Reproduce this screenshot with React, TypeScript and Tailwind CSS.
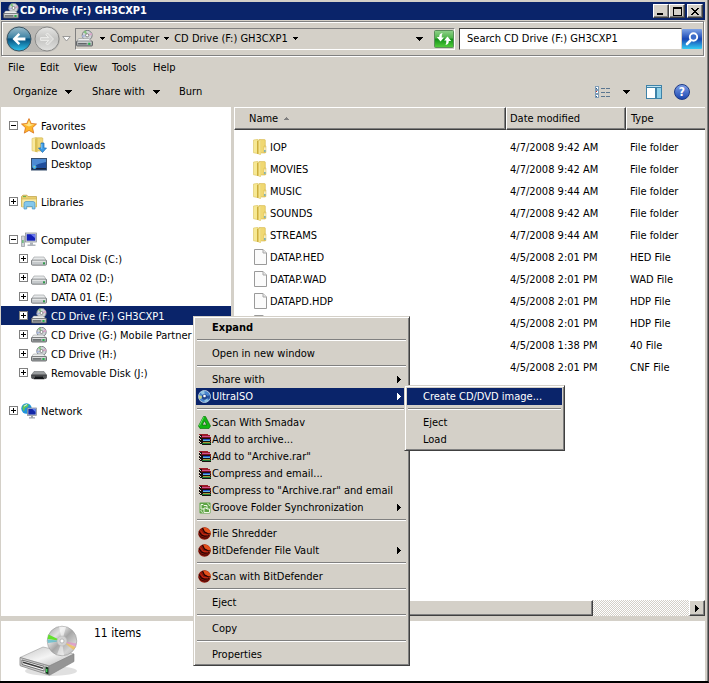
import type { ReactNode } from 'react';

type IconProps = { className?: string };

/* ---------- Icons ---------- */

function Caret({ className = 'h-1 w-[7px]' }: IconProps) {
  return (
    <svg viewBox="0 0 7 4" className={`shrink-0 ${className}`} shapeRendering="crispEdges" aria-hidden="true">
      <path d="M0 0h7v1H6v1H5v1H4v1H3V3H2V2H1V1H0z" fill="currentColor" />
    </svg>
  );
}

function MenuArrow() {
  return (
    <svg viewBox="0 0 4 7" className="h-[7px] w-1 shrink-0" shapeRendering="crispEdges" aria-hidden="true">
      <path d="M0 0h1v1h1v1h1v1h1v1H3v1H2v1H1v1H0z" fill="currentColor" />
    </svg>
  );
}

function DiscDriveIcon({ className = 'size-4' }: IconProps) {
  return (
    <svg viewBox="0 0 16 16" className={`shrink-0 ${className}`} aria-hidden="true">
      <circle cx="10.500" cy="5" r="4.700" fill="#cfd3d6" stroke="#777c80" strokeWidth=".9" />
      <path d="M10.500 5 7 1.800a4.800 4.800 0 0 1 2.400-1.400z" fill="#7fc47a" />
      <path d="M10.500 5l4-2.500a4.800 4.800 0 0 1 .6 2.400z" fill="#d8a6c8" />
      <path d="M10.500 5 6 7a4.800 4.800 0 0 1-.3-2z" fill="#a7b6dd" />
      <circle cx="10.500" cy="5" r="1.500" fill="#fff" stroke="#777" strokeWidth=".8" />
      <path d="M2.500 8h9.500l3.500 3H.5z" fill="#eceeee" stroke="#8a8d8f" strokeWidth=".5" />
      <rect x=".5" y="10.500" width="15" height="4.500" rx=".8" fill="#a9adaf" stroke="#505456" strokeWidth=".8" />
      <path d="M1.500 11.300h13" stroke="#f4f4f4" strokeWidth=".8" />
      <rect x="2" y="12.300" width="8" height="1.200" fill="#5c6062" />
      <rect x="11.500" y="12" width="2" height="2" fill="#22b44a" />
    </svg>
  );
}

function DiskIcon({ dark = false }: { dark?: boolean }) {
  if (dark) {
    return (
      <svg viewBox="0 0 16 16" className="size-4 shrink-0" aria-hidden="true">
        <path d="M3 6.500h10l2.500 3.500H.5z" fill="#9a9d9f" stroke="#6b6e70" strokeWidth=".6" />
        <path d="M.5 10h15v2.500q0 1-1 1h-1L12 11.500H4L2.500 13.500h-1q-1 0-1-1z" fill="#55585a" stroke="#2c2e30" strokeWidth=".6" />
        <path d="M4 11.500h8l1.500 2.800h-11z" fill="#15171a" />
      </svg>
    );
  }
  return (
    <svg viewBox="0 0 16 16" className="size-4 shrink-0" aria-hidden="true">
      <path d="M3 6h10l2.500 4H.5z" fill="#e6e8e9" stroke="#989c9e" strokeWidth=".6" />
      <path d="M.5 10q0-.8.8-.8h13.400q.8 0 .8.800v3.200q0 1-1 1h-13q-1 0-1-1z" fill="#c5c9cb" stroke="#686c6e" strokeWidth=".8" />
      <path d="M1.500 10.200h13" stroke="#fafafa" strokeWidth=".8" />
      <rect x="12" y="11.300" width="2" height="2" fill="#2f9a4b" />
    </svg>
  );
}

function StarIcon() {
  return (
    <svg viewBox="0 0 16 16" className="size-4 shrink-0" aria-hidden="true">
      <path d="M8 .6l2.200 4.900 5.300.5-4 3.700 1.200 5.400L8 12.400l-4.700 2.700 1.200-5.400-4-3.700 5.300-.5z" fill="#fdb62b" stroke="#d8701a" strokeWidth=".8" strokeLinejoin="round" />
      <path d="M8 2.600l1.500 3.600 3.700.4L8 8.500 2.800 6.600l3.700-.4z" fill="#ffe58a" />
    </svg>
  );
}

function FolderIcon() {
  return (
    <svg viewBox="0 0 16 16" className="size-4 shrink-0" aria-hidden="true">
      <path d="M1.500 1 6 .3v14.200l-4.500-.7z" fill="#f6e893" stroke="#dcc560" strokeWidth=".6" />
      <path d="M7 .6h5.500q.8 0 .8.800V14H7z" fill="#f0d873" stroke="#d3b54a" strokeWidth=".6" />
      <path d="M5 2 8.800.8v14.900L5 14.700z" fill="#cdae3c" />
      <path d="M6.500 1.700 8.800.8v14.900l-2.300-.7z" fill="#f5e48c" />
      <path d="M12 7h2v6.500h-2z" fill="#f2dc84" stroke="#cdae45" strokeWidth=".4" />
      <path d="M12.900 8.500V11" stroke="#fff" strokeWidth=".9" />
      <path d="M12.900 11v2" stroke="#3c9be0" strokeWidth="1" />
    </svg>
  );
}

function DownloadsIcon() {
  return (
    <svg viewBox="0 0 16 16" className="size-4 shrink-0" aria-hidden="true">
      <path d="M1 1.500 5 .5v14l-4-.8z" fill="#f8e9a0" stroke="#dcc160" strokeWidth=".6" />
      <path d="M5 .8h6q.8 0 .8.800V14H5z" fill="#efd778" stroke="#cfae43" strokeWidth=".6" />
      <path d="M4 2 6.500 1v14.500L4 14.500z" fill="#dbc055" />
      <path d="M10 6h3v5h2.500l-4 4.500-4-4.500H10z" fill="#3b9be6" stroke="#1767b0" strokeWidth=".7" />
      <path d="M10.700 6.800v5" stroke="#9bd3fb" strokeWidth=".8" />
    </svg>
  );
}

function DesktopIcon() {
  return (
    <svg viewBox="0 0 16 16" className="size-4 shrink-0" aria-hidden="true">
      <rect x=".5" y="2.500" width="15" height="11.500" fill="#1f4e9c" stroke="#38506e" />
      <path d="M1 3h14v3Q8 7 1 11z" fill="#4e8bd3" />
      <path d="M1 12h14v1.500H1z" fill="#16233a" />
      <circle cx="3.500" cy="11" r="2" fill="#45b0ea" />
      <path d="M2.800 10.200h1v1h-1z" fill="#f6d44a" />
    </svg>
  );
}

function LibrariesIcon() {
  return (
    <svg viewBox="0 0 16 16" className="size-4 shrink-0" aria-hidden="true">
      <path d="M.5 2.500 2 1.200h4l1 1.300h8.500v10H.5z" fill="#e9cf70" stroke="#bd9d41" strokeWidth=".7" />
      <path d="M.8 5h14.700v8H.8z" fill="#f8eaa6" stroke="#d0b352" strokeWidth=".6" />
      <path d="M2 2.600h3" stroke="#4fae4c" strokeWidth=".9" />
      <path d="M3 15V9.500Q3 7.500 5 7.500h7q2 0 2 2V15h-2.700v-2.500H5.700V15z" fill="#85c8ec" stroke="#4b94c2" strokeWidth=".7" />
    </svg>
  );
}

function ComputerIcon() {
  return (
    <svg viewBox="0 0 16 16" className="size-4 shrink-0" aria-hidden="true">
      <path d="M.5 4h3v10.500h-3z" fill="#cdd1d6" stroke="#84898f" strokeWidth=".6" />
      <path d="M1.300 8h1.200v3H1.300z" fill="#4db35c" />
      <rect x="4.500" y="1" width="11" height="9" fill="#d5d9df" stroke="#81868e" strokeWidth=".7" />
      <rect x="5.700" y="2.200" width="8.600" height="6.500" fill="#1320b8" />
      <path d="M9.500 2.200h4.800v4z" fill="#6d7cf0" />
      <path d="M9 10.500h3v2H9zM6.500 12.500h8v1.500h-8z" fill="#aeb3ba" />
    </svg>
  );
}

function NetworkIcon() {
  return (
    <svg viewBox="0 0 16 16" className="size-4 shrink-0" aria-hidden="true">
      <circle cx="5.500" cy="5.500" r="5.200" fill="#1f93dd" />
      <path d="M2 2.500Q5 0 8 1.500L6.500 4 4 5 3 8.500Q.5 6 2 2.500zM6 8l3-1v3z" fill="#62c65a" />
      <path d="M3 3.200 6 1.500" stroke="#d8f3ff" strokeWidth="1" />
      <rect x="6.500" y="5" width="9" height="7.500" fill="#dfe3e8" stroke="#7c838c" strokeWidth=".7" />
      <rect x="7.300" y="5.800" width="7.400" height="5.800" fill="#1428a8" />
      <path d="M11 5.800h3.700v3.500z" fill="#5f83ef" />
      <path d="M10 13h2v1.200h2v1.300H8v-1.300h2z" fill="#9da3ab" />
    </svg>
  );
}

function FileIcon() {
  return (
    <svg viewBox="0 0 16 16" className="size-4 shrink-0" aria-hidden="true">
      <path d="M2.500.5h8.500l3.500 3.500v11.500h-12z" fill="#fbfbfb" stroke="#9a9a9a" />
      <path d="M11 .5V4h3.500" fill="#e6e6e6" stroke="#a8a8a8" />
    </svg>
  );
}

function UltraIsoIcon() {
  return (
    <svg viewBox="0 0 13 13" className="size-[13px] shrink-0" aria-hidden="true">
      <circle cx="6.500" cy="6.500" r="6" fill="#4a86cf" stroke="#c3d3e2" strokeWidth=".9" />
      <path d="M6.500 6.500 2 2.200A6 6 0 0 1 6.500.8zM6.500 6.500l4.300 4.300a6 6 0 0 1-4.300 1.500z" fill="#92c4e2" />
      <path d="M6.500 6.500.8 5.200A6 6 0 0 0 1.500 9.500z" fill="#c4d08f" />
      <path d="M6.500 6.500l5.600-1.200a6 6 0 0 1-.8 4z" fill="#27529c" />
      <circle cx="6.500" cy="7" r="2.700" fill="#1f458f" />
      <circle cx="6.500" cy="6" r="1.300" fill="#fff" />
    </svg>
  );
}

function SmadavIcon() {
  return (
    <svg viewBox="0 0 13 13" className="size-[13px] shrink-0" aria-hidden="true">
      <path d="M5.500.5h2l5 9.500-1.500 2.500h-9L.5 10z" fill="#12b512" stroke="#087a08" strokeWidth=".7" />
      <path d="M6.500 4.800 8.800 9H4.200z" fill="#d4d0c8" stroke="#066a06" strokeWidth=".7" />
      <path d="M5.700 1.200 1.400 9.800" stroke="#67e667" strokeWidth=".9" />
    </svg>
  );
}

function RarIcon() {
  return (
    <svg viewBox="0 0 13 13" className="size-[13px] shrink-0" shapeRendering="crispEdges" aria-hidden="true">
      <path d="M1 1h8l1 1h2v2h1v8H4v-1H2v-1H1z" fill="#1a1010" />
      <path d="M1 1h8l1 1h2v1H4V2H1z" fill="#9b1c28" />
      <path d="M4 3h8v1H4z" fill="#d0508c" />
      <path d="M3 4h10v1H3z" fill="#7a1020" />
      <path d="M5 6h7v1H5z" fill="#2a50c8" />
      <path d="M5 7h7v1H5z" fill="#58b8e0" />
      <path d="M5 9h7v1H5z" fill="#a8983a" />
      <path d="M4 10h9v1H4z" fill="#1d7d35" />
      <path d="M0 2h2v1H0zM2 3h1v1H2zM0 5h2v1H0zM2 6h1v1H2zM0 8h2v1H0zM2 9h1v1H2z" fill="#ded9c9" />
      <path d="M12 5h1v2h-1zM12 8h1v1h-1z" fill="#7a2a1a" />
    </svg>
  );
}

function GrooveIcon() {
  return (
    <svg viewBox="0 0 13 13" className="size-[13px] shrink-0" aria-hidden="true">
      <rect x="1.500" y="1.500" width="11" height="11" rx="1" fill="#5da345" />
      <path d="M3 3.500h2l1 1h3V8H3z" fill="none" stroke="#eef8e6" />
      <path d="M6 7h2l1 1h2.500v3.500H6z" fill="#5da345" stroke="#eef8e6" />
      <path d="M9.500 2.500q2 .5 2 2.500M2.800 9q0 2 2 2.500" fill="none" stroke="#d7efc9" />
    </svg>
  );
}

function BitDefenderIcon() {
  return (
    <svg viewBox="0 0 13 13" className="size-[13px] shrink-0" aria-hidden="true">
      <circle cx="6.500" cy="6.500" r="6.200" fill="#8f1508" />
      <path d="M5 .8Q9-.5 11.500 3t.5 5.500L9 5.500 6 4z" fill="#e2501c" />
      <path d="M4.500 1 6.500 5l3 1.500 3 .5M1 4.500 3.500 8l3 1.300 5-.5" fill="none" stroke="#1c0403" strokeWidth="1.100" />
      <path d="M.8 7.500 3 10l4 1.200 3-.4" fill="none" stroke="#3a0604" strokeWidth=".9" />
      <path d="M2.500 3.500 5 7.300l5 .6" fill="none" stroke="#c62a12" strokeWidth="1" />
    </svg>
  );
}

function BackIcon() {
  return (
    <svg viewBox="0 0 26 26" className="size-[26px]" aria-hidden="true">
      <defs>
        <linearGradient id="back" x1="0" y1="0" x2="0" y2="1">
          <stop offset="0" stopColor="#9cbccb" />
          <stop offset=".45" stopColor="#3e83a5" />
          <stop offset=".5" stopColor="#07507e" />
          <stop offset="1" stopColor="#2fc4ee" />
        </linearGradient>
      </defs>
      <circle cx="13" cy="13" r="12" fill="url(#back)" stroke="#3c5563" />
      <path d="M12.500 7 6.500 13l6 6 1.700-1.800-2.800-2.800h8v-2.800h-8l2.800-2.800z" fill="#fff" />
    </svg>
  );
}

function ForwardIcon() {
  return (
    <svg viewBox="0 0 26 26" className="size-[26px]" aria-hidden="true">
      <defs>
        <linearGradient id="forward" x1="0" y1="0" x2="0" y2="1">
          <stop offset="0" stopColor="#e6e6e4" />
          <stop offset=".5" stopColor="#c4c4c2" />
          <stop offset="1" stopColor="#e2e2e0" />
        </linearGradient>
      </defs>
      <circle cx="13" cy="13" r="12" fill="url(#forward)" stroke="#8b8b89" />
      <path d="M13.500 7l6 6-6 6-1.700-1.800 2.800-2.800h-8v-2.800h8l-2.800-2.800z" fill="#d6d6d4" stroke="#f2f2f0" strokeWidth=".8" />
    </svg>
  );
}

function RefreshIcon() {
  return (
    <svg viewBox="0 0 20 18" className="h-[18px] w-5" aria-hidden="true">
      <defs>
        <linearGradient id="refresh" x1="0" y1="0" x2="0" y2="1">
          <stop offset="0" stopColor="#8fd18b" />
          <stop offset=".45" stopColor="#4fb449" />
          <stop offset=".5" stopColor="#119018" />
          <stop offset="1" stopColor="#55cf3c" />
        </linearGradient>
      </defs>
      <rect x=".5" y=".5" width="19" height="17" rx="1" fill="url(#refresh)" stroke="#5b8f5b" />
      <path d="M8.500 3Q5 3.500 5.200 7H2.800L6.500 11.500 10 7.500H7.700Q7.500 5 8.500 3zM11.500 15q3.500-.5 3.300-4h2.400L13.500 6.500 10 10.500h2.300q.2 2.500-.8 4.500z" fill="#fff" />
    </svg>
  );
}

function SearchIcon() {
  return (
    <svg viewBox="0 0 20 20" className="size-5" aria-hidden="true">
      <defs>
        <linearGradient id="search" x1="0" y1="0" x2="0" y2="1">
          <stop offset="0" stopColor="#7ea3e6" />
          <stop offset=".5" stopColor="#1746b4" />
          <stop offset="1" stopColor="#34cdf4" />
        </linearGradient>
      </defs>
      <rect width="20" height="20" rx="1" fill="url(#search)" />
      <path d="M8.500 11.500 5 15" stroke="#fff" strokeWidth="2.600" strokeLinecap="round" />
      <circle cx="11.500" cy="8" r="3.700" fill="#3c6cc9" stroke="#fff" strokeWidth="1.900" />
    </svg>
  );
}

function ViewsIcon() {
  return (
    <svg viewBox="0 0 16 12" className="h-3 w-4" shapeRendering="crispEdges" aria-hidden="true">
      <path d="M0 0h4v12H0z" fill="#7f9cb6" />
      <path d="M1 1h2v2H1zM1 5h2v2H1zM1 9h2v2H1z" fill="#fff" />
      <path d="M1 2h1v1H1zM1 10h1v1H1z" fill="#2f5d8a" />
      <path d="M1 5h1v1H1z" fill="#d02a1b" />
      <path d="M6 2h4v1H6zM11 2h4v1h-4zM6 6h4v1H6zM11 6h4v1h-4zM6 10h4v1H6zM11 10h4v1h-4z" fill="#5b7690" />
    </svg>
  );
}

function PreviewPaneIcon() {
  return (
    <svg viewBox="0 0 16 14" className="h-3.5 w-4" shapeRendering="crispEdges" aria-hidden="true">
      <path d="M0 0h16v14H0z" fill="#3e82a8" />
      <path d="M1 1h14v1H1z" fill="#bfe3f2" />
      <path d="M1 3h8v10H1z" fill="#fff" />
      <path d="M11 3h4v10h-4z" fill="#8fd0e8" />
    </svg>
  );
}

function HelpIcon() {
  return (
    <span className="flex size-4 items-center justify-center rounded-full border border-[#1c3a86] bg-linear-to-b from-[#7e9ee6] to-[#1b46b0] text-xs font-bold text-white">
      ?
    </span>
  );
}

function LargeDriveIcon() {
  return (
    <svg viewBox="0 0 60 52" className="h-[52px] w-[60px] shrink-0" aria-hidden="true">
      <defs>
        <linearGradient id="disc" x1="0" y1="0" x2="1" y2="1">
          <stop offset="0" stopColor="#9c9c9c" />
          <stop offset=".3" stopColor="#e2e2e2" />
          <stop offset=".5" stopColor="#a6a6a6" />
          <stop offset=".75" stopColor="#d2d2d2" />
          <stop offset="1" stopColor="#b0b0b0" />
        </linearGradient>
        <linearGradient id="lid" x1="0" y1="0" x2="1" y2="1">
          <stop offset="0" stopColor="#c6c6c6" />
          <stop offset=".5" stopColor="#f4f4f4" />
          <stop offset="1" stopColor="#b0b0b0" />
        </linearGradient>
      </defs>
      <ellipse cx="32" cy="46" rx="26" ry="5" fill="#000" opacity=".12" />
      <path d="M1 32.500 24 22l31 7-24 12z" fill="url(#lid)" stroke="#9a9a9a" strokeWidth=".6" />
      <path d="M1 32.500l29 8.500v9L2 41q-1 0-1-1z" fill="#cfcfcf" stroke="#777" strokeWidth=".7" />
      <path d="M30 41l25-12v7.500L31 50q-1 .3-1 0z" fill="#959595" stroke="#808080" strokeWidth=".6" />
      <path d="M3 35l22 6.300V46L3 39.500z" fill="#f6f6f6" stroke="#555" strokeWidth=".8" />
      <path d="M4 37.300l20 5.900" stroke="#3c3c3c" strokeWidth="1.600" />
      <path d="M26.500 41.500l3 .9v6.800l-3-1z" fill="#12351a" />
      <path d="M27.700 44v3" stroke="#39d353" strokeWidth="1.400" />
      <circle cx="43" cy="16" r="14.800" fill="url(#disc)" stroke="#989898" strokeWidth=".6" />
      <path d="M43 16 29.500 9.500 28.500 14z" fill="#62e02c" />
      <path d="M43 16 28.300 14.500 29 18z" fill="#4bb9c9" opacity=".7" />
      <path d="M43 16 56.500 22l-2 3z" fill="#f2c05a" opacity=".8" />
      <path d="M43 16 57.500 18.500l-1 3z" fill="#e68ec4" opacity=".7" />
      <path d="M43 16 40 1.500l7 .4z" fill="#fff" opacity=".6" />
      <path d="M43 16 38 29.500l7 1z" fill="#fff" opacity=".5" />
      <circle cx="43" cy="16" r="5" fill="#d2d2d2" stroke="#b4b4b4" strokeWidth=".5" />
      <circle cx="43" cy="16" r="2" fill="#fff" stroke="#9d9d9d" strokeWidth=".6" />
    </svg>
  );
}

/* ---------- Data ---------- */

type TreeNode = { label: string; icon: ReactNode; expand?: '+' | '-'; level: 0 | 1; selected?: boolean };

const treeGroups: TreeNode[][] = [
  [
    { label: 'Favorites', icon: <StarIcon />, expand: '-', level: 0 },
    { label: 'Downloads', icon: <DownloadsIcon />, level: 1 },
    { label: 'Desktop', icon: <DesktopIcon />, level: 1 },
  ],
  [{ label: 'Libraries', icon: <LibrariesIcon />, expand: '+', level: 0 }],
  [
    { label: 'Computer', icon: <ComputerIcon />, expand: '-', level: 0 },
    { label: 'Local Disk (C:)', icon: <DiskIcon />, expand: '+', level: 1 },
    { label: 'DATA 02 (D:)', icon: <DiskIcon />, expand: '+', level: 1 },
    { label: 'DATA 01 (E:)', icon: <DiskIcon />, expand: '+', level: 1 },
    { label: 'CD Drive (F:) GH3CXP1', icon: <DiscDriveIcon />, expand: '+', level: 1, selected: true },
    { label: 'CD Drive (G:) Mobile Partner', icon: <DiscDriveIcon />, expand: '+', level: 1 },
    { label: 'CD Drive (H:)', icon: <DiscDriveIcon />, expand: '+', level: 1 },
    { label: 'Removable Disk (J:)', icon: <DiskIcon dark />, expand: '+', level: 1 },
  ],
  [{ label: 'Network', icon: <NetworkIcon />, expand: '+', level: 0 }],
];

const files = [
  { name: 'IOP', date: '4/7/2008 9:42 AM', type: 'File folder' },
  { name: 'MOVIES', date: '4/7/2008 9:42 AM', type: 'File folder' },
  { name: 'MUSIC', date: '4/7/2008 9:44 AM', type: 'File folder' },
  { name: 'SOUNDS', date: '4/7/2008 9:42 AM', type: 'File folder' },
  { name: 'STREAMS', date: '4/7/2008 9:44 AM', type: 'File folder' },
  { name: 'DATAP.HED', date: '4/5/2008 2:01 PM', type: 'HED File' },
  { name: 'DATAP.WAD', date: '4/5/2008 2:01 PM', type: 'WAD File' },
  { name: 'DATAPD.HDP', date: '4/5/2008 2:01 PM', type: 'HDP File' },
  { name: '', date: '4/5/2008 2:01 PM', type: 'HDP File' },
  { name: '', date: '4/5/2008 1:38 PM', type: '40 File' },
  { name: '', date: '4/5/2008 2:01 PM', type: 'CNF File' },
];

type MenuEntry = { label: string; icon?: ReactNode; bold?: boolean; arrow?: boolean; active?: boolean; submenu?: MenuEntry[][] };

const contextMenu: MenuEntry[][] = [
  [{ label: 'Expand', bold: true }],
  [{ label: 'Open in new window' }],
  [
    { label: 'Share with', arrow: true },
    {
      label: 'UltraISO',
      icon: <UltraIsoIcon />,
      arrow: true,
      active: true,
      submenu: [[{ label: 'Create CD/DVD image...', active: true }], [{ label: 'Eject' }, { label: 'Load' }]],
    },
  ],
  [
    { label: 'Scan With Smadav', icon: <SmadavIcon /> },
    { label: 'Add to archive...', icon: <RarIcon /> },
    { label: 'Add to "Archive.rar"', icon: <RarIcon /> },
    { label: 'Compress and email...', icon: <RarIcon /> },
    { label: 'Compress to "Archive.rar" and email', icon: <RarIcon /> },
    { label: 'Groove Folder Synchronization', icon: <GrooveIcon />, arrow: true },
  ],
  [
    { label: 'File Shredder', icon: <BitDefenderIcon /> },
    { label: 'BitDefender File Vault', icon: <BitDefenderIcon />, arrow: true },
  ],
  [{ label: 'Scan with BitDefender', icon: <BitDefenderIcon /> }],
  [{ label: 'Eject' }],
  [{ label: 'Copy' }],
  [{ label: 'Properties' }],
];

/* ---------- Parts ---------- */

const raised =
  'border border-t-white border-l-white border-r-[#404040] border-b-[#404040] bg-[#d4d0c8] shadow-[inset_-1px_-1px_0_#808080]';

function TitleBar() {
  return (
    <header className="flex h-[18px] items-center gap-px bg-[#0a246a] px-0.5 text-white">
      <DiscDriveIcon />
      <h1 className="flex-1 font-bold">CD Drive (F:) GH3CXP1</h1>
      <div className="flex text-black">
        <button aria-label="Minimize" className={`flex h-3.5 w-4 items-end justify-center pb-0.5 ${raised}`}>
          <span className="mr-0.5 h-0.5 w-1.5 bg-black" />
        </button>
        <button aria-label="Maximize" className={`flex h-3.5 w-4 items-center justify-center ${raised}`}>
          <span className="h-[9px] w-[9px] border border-t-2 border-black" />
        </button>
        <button aria-label="Close" className={`ml-0.5 flex h-3.5 w-4 items-center justify-center ${raised}`}>
          <svg viewBox="0 0 8 7" className="h-[7px] w-2" shapeRendering="crispEdges" aria-hidden="true">
            <path d="M0 0h2v1h1v1h2V1h1V0h2v1H7v1H6v1H5v1h1v1h1v1h1v1H6V6H5V5H3v1H2v1H0V6h1V5h1V4h1V3H2V2H1V1H0z" fill="#000" />
          </svg>
        </button>
      </div>
    </header>
  );
}

function NavigationBar() {
  return (
    <nav className="mt-px mr-px flex h-[35px] items-center border border-[#808080] pr-px pl-1 shadow-[1px_1px_0_#fff,inset_1px_1px_0_#fff]">
      <div className="flex items-center gap-0.5 rounded-full bg-[#bab8b4]">
        <button aria-label="Back">
          <BackIcon />
        </button>
        <button aria-label="Forward">
          <ForwardIcon />
        </button>
      </div>
      <button aria-label="Recent pages" className="ml-0.5 w-[9px]">
        <svg viewBox="0 0 9 6" className="h-1.5 w-[9px]" aria-hidden="true">
          <path d="M.8.500h7.400L4.500 5z" fill="#fff" stroke="#888" strokeWidth=".8" />
        </svg>
      </button>
      <div className="ml-1 flex h-[22px] flex-1 items-center border border-t-[#808080] border-l-[#808080] border-r-white border-b-white">
        <DiscDriveIcon className="size-[17px]" />
        <Caret className="ml-[7px] h-[3px] w-[5px]" />
        <button className="ml-[5px]">Computer</button>
        <Caret className="ml-[5px] h-[3px] w-[5px]" />
        <button className="ml-[5px]">CD Drive (F:) GH3CXP1</button>
        <Caret className="ml-[5px] h-[3px] w-[5px]" />
        <button aria-label="Previous locations" className="mr-[11px] ml-auto">
          <Caret />
        </button>
        <button aria-label="Refresh">
          <RefreshIcon />
        </button>
      </div>
      <input
        type="search"
        aria-label="Search"
        defaultValue="Search CD Drive (F:) GH3CXP1"
        className="ml-1 h-[22px] w-[223px] border border-t-[#404040] border-l-[#404040] border-r-[#d4d0c8] border-b-[#d4d0c8] bg-white px-[7px] outline-none"
      />
      <button aria-label="Start search">
        <SearchIcon />
      </button>
    </nav>
  );
}

function MenuBar() {
  return (
    <div className="flex h-[22px] items-center pt-0.5 pl-[7px]">
      <button className="w-8 text-left">File</button>
      <button className="w-[34px] text-left">Edit</button>
      <button className="w-[38px] text-left">View</button>
      <button className="w-[41px] text-left">Tools</button>
      <button className="text-left">Help</button>
    </div>
  );
}

function Toolbar() {
  return (
    <div className="flex h-[28px] items-center pr-[15px] pl-3">
      <button className="flex w-[79px] items-center gap-2">
        Organize
        <Caret />
      </button>
      <button className="flex w-[87px] items-center gap-2">
        Share with
        <Caret />
      </button>
      <button>Burn</button>
      <div className="ml-auto flex items-center">
        <button aria-label="Change view">
          <ViewsIcon />
        </button>
        <button aria-label="More view options" className="ml-3">
          <Caret />
        </button>
        <button aria-label="Show the preview pane" className="ml-4">
          <PreviewPaneIcon />
        </button>
        <button aria-label="Get help" className="ml-3">
          <HelpIcon />
        </button>
      </div>
    </div>
  );
}

function ExpandBox({ state }: { state: '+' | '-' }) {
  return (
    <svg viewBox="0 0 9 9" className="size-[9px] shrink-0" shapeRendering="crispEdges" aria-hidden="true">
      <path d="M0 0h9v9H0z" fill="#808080" />
      <path d="M1 1h7v7H1z" fill="#fff" />
      <path d={state === '+' ? 'M2 4h5v1H2zM4 2h1v5H4z' : 'M2 4h5v1H2z'} fill="#000" />
    </svg>
  );
}

function Sidebar() {
  return (
    <aside className="w-[230px] shrink-0 space-y-[19px] bg-white pt-[9px]">
      {treeGroups.map((group) => (
        <ul key={group[0].label}>
          {group.map((node) => (
            <li key={node.label}>
              <button
                className={`flex h-[19px] w-full items-center text-left whitespace-nowrap ${node.level === 0 ? 'pl-2' : 'pl-[18px]'} ${
                  node.selected ? 'bg-[#0a246a] text-white' : ''
                }`}
              >
                <span className="w-3 shrink-0">{node.expand && <ExpandBox state={node.expand} />}</span>
                {node.icon}
                <span className="ml-1 pt-0.5">{node.label}</span>
              </button>
            </li>
          ))}
        </ul>
      ))}
    </aside>
  );
}

function FileList() {
  return (
    <section className="flex min-w-0 flex-1 flex-col bg-white">
      <table className="w-full table-fixed border-separate border-spacing-0 text-left">
        <thead>
          <tr className="h-[23px]">
            <th className={`pl-3.5 font-normal ${raised}`}>
              <span className="flex items-center gap-1.5">
                Name
                <Caret className="h-[3px] w-[5px] rotate-180 text-[#808080]" />
              </span>
            </th>
            <th className={`w-[120px] pl-[3px] font-normal ${raised}`}>Date modified</th>
            <th className="w-[79px] border-t border-b border-l border-t-white border-l-white border-b-[#404040] bg-[#d4d0c8] pl-1 font-normal shadow-[inset_0_-1px_0_#808080]">
              Type
            </th>
          </tr>
        </thead>
        <tbody className="before:block before:h-1.5">
          {files.map((file, index) => (
            <tr key={index} className="h-[22px]">
              <td className="pl-[18px]">
                <span className="flex items-center gap-0.5">
                  {file.type === 'File folder' ? <FolderIcon /> : <FileIcon />}
                  <span className="pt-0.5">{file.name}</span>
                </span>
              </td>
              <td className="pt-0.5 pl-1">{file.date}</td>
              <td className="pt-0.5 pl-1">{file.type}</td>
            </tr>
          ))}
        </tbody>
      </table>
      <div className="mt-auto flex h-4">
        <button aria-label="Scroll left" className={`flex w-4 items-center justify-center ${raised}`}>
          <span className="rotate-180">
            <MenuArrow />
          </span>
        </button>
        <div className={`flex-1 ${raised}`} />
        <div className="w-24 bg-[repeating-conic-gradient(#fff_0_25%,#d4d0c8_0_50%)] bg-[length:2px_2px]" />
        <button aria-label="Scroll right" className={`flex w-4 items-center justify-center ${raised}`}>
          <MenuArrow />
        </button>
      </div>
    </section>
  );
}

function PopupMenu({ groups, className }: { groups: MenuEntry[][]; className: string }) {
  return (
    <div
      role="menu"
      className={`absolute z-10 border border-t-[#d4d0c8] border-l-[#d4d0c8] border-r-[#404040] border-b-[#404040] bg-[#d4d0c8] p-0.5 text-black shadow-[inset_1px_1px_0_#fff,inset_-1px_-1px_0_#808080] ${className}`}
    >
      {groups.map((group, index) => (
        <div key={index}>
          {index > 0 && <div className="mx-px mt-[3px] mb-1 h-0.5 border-t border-t-[#808080] bg-white" />}
          {group.map((entry) => (
            <div key={entry.label} className="relative">
              <button
                role="menuitem"
                className={`flex h-[17px] w-full items-center pr-1.5 pl-0.5 text-left whitespace-nowrap ${entry.active ? 'bg-[#0a246a] text-white' : ''} ${
                  entry.bold ? 'font-bold' : ''
                }`}
              >
                <span className="w-3.5 shrink-0">{entry.icon}</span>
                <span className="flex-1">{entry.label}</span>
                {entry.arrow && <MenuArrow />}
              </button>
              {entry.submenu && <PopupMenu groups={entry.submenu} className="-top-[3px] left-[208px] w-[161px]" />}
            </div>
          ))}
        </div>
      ))}
    </div>
  );
}

export default function App() {
  return (
    <div className="relative flex min-h-screen flex-col border-r border-b-2 border-r-[#404040] border-b-black bg-[#d4d0c8] font-['DejaVu_Sans_Condensed','DejaVu_Sans',sans-serif] text-[11px] leading-[14px] text-black">
      <div className="flex flex-1 flex-col border-r border-[#808080] pt-0.5 pr-0.5 pl-px">
        <TitleBar />
        <NavigationBar />
        <MenuBar />
        <Toolbar />
        <main className="mt-px flex flex-1 gap-[3px]">
          <Sidebar />
          <FileList />
        </main>
        <footer className="mt-[5px] flex h-[60px] items-start bg-white pt-1 pl-[18px]">
          <LargeDriveIcon />
          <p className="ml-[15px] text-xs leading-4">11 items</p>
        </footer>
      </div>
      <PopupMenu groups={contextMenu} className="top-[316px] left-[193px] w-[217px]" />
    </div>
  );
}
